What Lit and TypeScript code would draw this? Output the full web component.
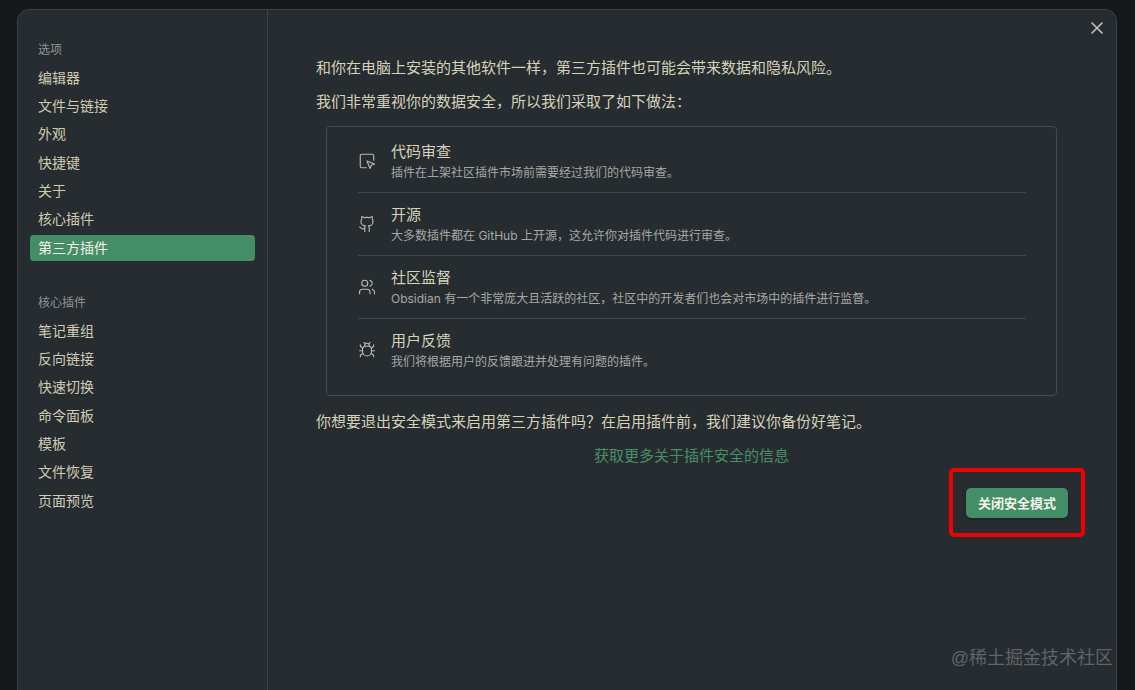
import { LitElement, html, css, svg } from "lit";
import { customElement } from "lit/decorators.js";

const ICONS = {
  pointer: svg`<path d="M21 11V5a2 2 0 0 0-2-2H5a2 2 0 0 0-2 2v14a2 2 0 0 0 2 2h6"/><path d="m12 12 4 10 1.7-4.3L22 16Z"/>`,
  github: svg`<path d="M15 22v-4a4.8 4.8 0 0 0-1-3.5c3 0 6-2 6-5.5.08-1.25-.27-2.48-1-3.5.28-1.15.28-2.35 0-3.5 0 0-1 0-3 1.5-2.64-.5-5.36-.5-8 0C6 2 5 2 5 2c-.3 1.15-.3 2.35 0 3.5A5.403 5.403 0 0 0 4 9c0 3.5 3 5.5 6 5.5-.39.49-.68 1.05-.85 1.65-.17.6-.22 1.23-.15 1.85v4"/><path d="M9 18c-4.51 2-5-2-7-2"/>`,
  users: svg`<path d="M16 21v-2a4 4 0 0 0-4-4H6a4 4 0 0 0-4 4v2"/><circle cx="9" cy="7" r="4"/><path d="M22 21v-2a4 4 0 0 0-3-3.87"/><path d="M16 3.13a4 4 0 0 1 0 7.75"/>`,
  bug: svg`<path d="m8 2 1.88 1.88"/><path d="M14.12 3.88 16 2"/><path d="M9 7.13v-1a3.003 3.003 0 1 1 6 0v1"/><path d="M12 20c-3.3 0-6-2.7-6-6v-3a4 4 0 0 1 4-4h4a4 4 0 0 1 4 4v3c0 3.3-2.7 6-6 6"/><path d="M6.53 9C4.6 8.8 3 7.1 3 5"/><path d="M6 13H2"/><path d="M3 21c0-2.1 1.7-3.9 3.8-4"/><path d="M20.97 5c0 2.1-1.6 3.8-3.5 4"/><path d="M22 13h-4"/><path d="M17.2 17c2.1.1 3.8 1.9 3.8 4"/>`,
};

const OPTIONS = ["编辑器", "文件与链接", "外观", "快捷键", "关于", "核心插件", "第三方插件"];
const CORE = ["笔记重组", "反向链接", "快速切换", "命令面板", "模板", "文件恢复", "页面预览"];
const ROWS = [
  { icon: ICONS.pointer, title: "代码审查", desc: "插件在上架社区插件市场前需要经过我们的代码审查。" },
  { icon: ICONS.github, title: "开源", desc: "大多数插件都在 GitHub 上开源，这允许你对插件代码进行审查。" },
  { icon: ICONS.users, title: "社区监督", desc: "Obsidian 有一个非常庞大且活跃的社区，社区中的开发者们也会对市场中的插件进行监督。" },
  { icon: ICONS.bug, title: "用户反馈", desc: "我们将根据用户的反馈跟进并处理有问题的插件。" },
];

@customElement("app-root")
export class AppRoot extends LitElement {
  static styles = css`
    :host {
      display: block;
      height: 690px;
      overflow: hidden;
      background: #15191c;
      font-family: "Inter", "Liberation Sans", "Noto Sans CJK SC", sans-serif;
      color: #d6d2b8;
      position: relative;
    }
    .modal {
      position: relative;
      box-sizing: border-box;
      margin: 0 18px 0 17px;
      height: 720px;
      top: 9px;
      display: flex;
      background: #272c31;
      border: 1px solid #3c4147;
      border-radius: 12px;
    }
    .side {
      width: 250px;
      flex: none;
      box-sizing: border-box;
      border-right: 1px solid #3e444a;
      padding: 30px 12px 0 12px;
    }
    .group {
      display: flex;
      flex-direction: column;
      gap: 2.33px;
      margin-bottom: 32px;
    }
    .label {
      font-size: 12px;
      line-height: 20px;
      color: #8f9391;
      padding-left: 8px;
      margin-bottom: 2.5px;
    }
    .item {
      height: 26px;
      line-height: 26px;
      font-size: 14px;
      padding-left: 8px;
      border-radius: 4px;
      color: #cfcbb2;
    }
    .item.active {
      background: #438e66;
      color: #f2f2ea;
    }
    .main {
      flex: 1;
      min-width: 0;
      padding: 47px 49px 0 48px;
      font-size: 15px;
      line-height: 22px;
    }
    .main p {
      margin: 0;
    }
    .p2 {
      margin-top: 12px !important;
    }
    .box {
      box-sizing: border-box;
      margin: 13px 10px 15px 10px;
      height: 270px;
      padding: 3px 30px 0 31px;
      border: 1px solid #474c52;
      border-radius: 4px;
    }
    .row {
      display: flex;
      align-items: center;
      height: 62px;
      box-sizing: content-box;
      border-top: 1px solid #41464c;
    }
    .row:first-child {
      border-top: none;
    }
    .row svg {
      width: 18px;
      height: 18px;
      margin-right: 15px;
      flex: none;
      fill: none;
      stroke: #b9b9ac;
      stroke-width: 1.5;
      stroke-linecap: round;
      stroke-linejoin: round;
    }
    .title {
      font-size: 15px;
      line-height: 20px;
      color: #d6d2b8;
    }
    .desc {
      font-size: 12px;
      line-height: 16px;
      margin-top: 3px;
      color: #a6a8a4;
    }
    .link {
      margin-top: 12px !important;
      text-align: center;
      color: #478f68;
    }
    .actions {
      display: flex;
      justify-content: flex-end;
      margin: 1px -18px 0 0;
    }
    .mark {
      box-sizing: border-box;
      border: 4px solid #f00000;
      border-radius: 5px;
      padding: 16px 13px 15px 13px;
      display: flex;
    }
    button {
      font: inherit;
      font-size: 13px;
      font-weight: 600;
      line-height: 30px;
      height: 30px;
      padding: 0 12px;
      border: none;
      border-radius: 5px;
      background: #438e66;
      color: #f4f4ee;
      box-shadow: 0 1px 3px rgba(0, 0, 0, 0.35);
    }
    .close {
      position: absolute;
      top: 11px;
      right: 12px;
      width: 14px;
      height: 14px;
      fill: none;
      stroke: #c0c2c2;
      stroke-width: 1.6;
      stroke-linecap: round;
    }
    .watermark {
      position: absolute;
      right: 22px;
      top: 646px;
      font-size: 18px;
      line-height: 24px;
      color: #5f6468;
      white-space: nowrap;
      font-family: "Liberation Sans", "Noto Sans CJK SC", sans-serif;
    }
  `;

  render() {
    return html`
      <div class="modal">
        <nav class="side">
          <div class="group">
            <div class="label">选项</div>
            ${OPTIONS.map(
              (t) => html`<div class="item ${t === "第三方插件" ? "active" : ""}">${t}</div>`
            )}
          </div>
          <div class="group">
            <div class="label">核心插件</div>
            ${CORE.map((t) => html`<div class="item">${t}</div>`)}
          </div>
        </nav>
        <main class="main">
          <p>和你在电脑上安装的其他软件一样，第三方插件也可能会带来数据和隐私风险。</p>
          <p class="p2">我们非常重视你的数据安全，所以我们采取了如下做法：</p>
          <div class="box">
            ${ROWS.map(
              (r) => html`
                <div class="row">
                  <svg viewBox="0 0 24 24">${r.icon}</svg>
                  <div>
                    <div class="title">${r.title}</div>
                    <div class="desc">${r.desc}</div>
                  </div>
                </div>
              `
            )}
          </div>
          <p>你想要退出安全模式来启用第三方插件吗？在启用插件前，我们建议你备份好笔记。</p>
          <p class="link">获取更多关于插件安全的信息</p>
          <div class="actions">
            <div class="mark"><button>关闭安全模式</button></div>
          </div>
        </main>
        <svg class="close" viewBox="0 0 14 14"><path d="M2 2 12 12M12 2 2 12" /></svg>
      </div>
      <div class="watermark">@稀土掘金技术社区</div>
    `;
  }
}
